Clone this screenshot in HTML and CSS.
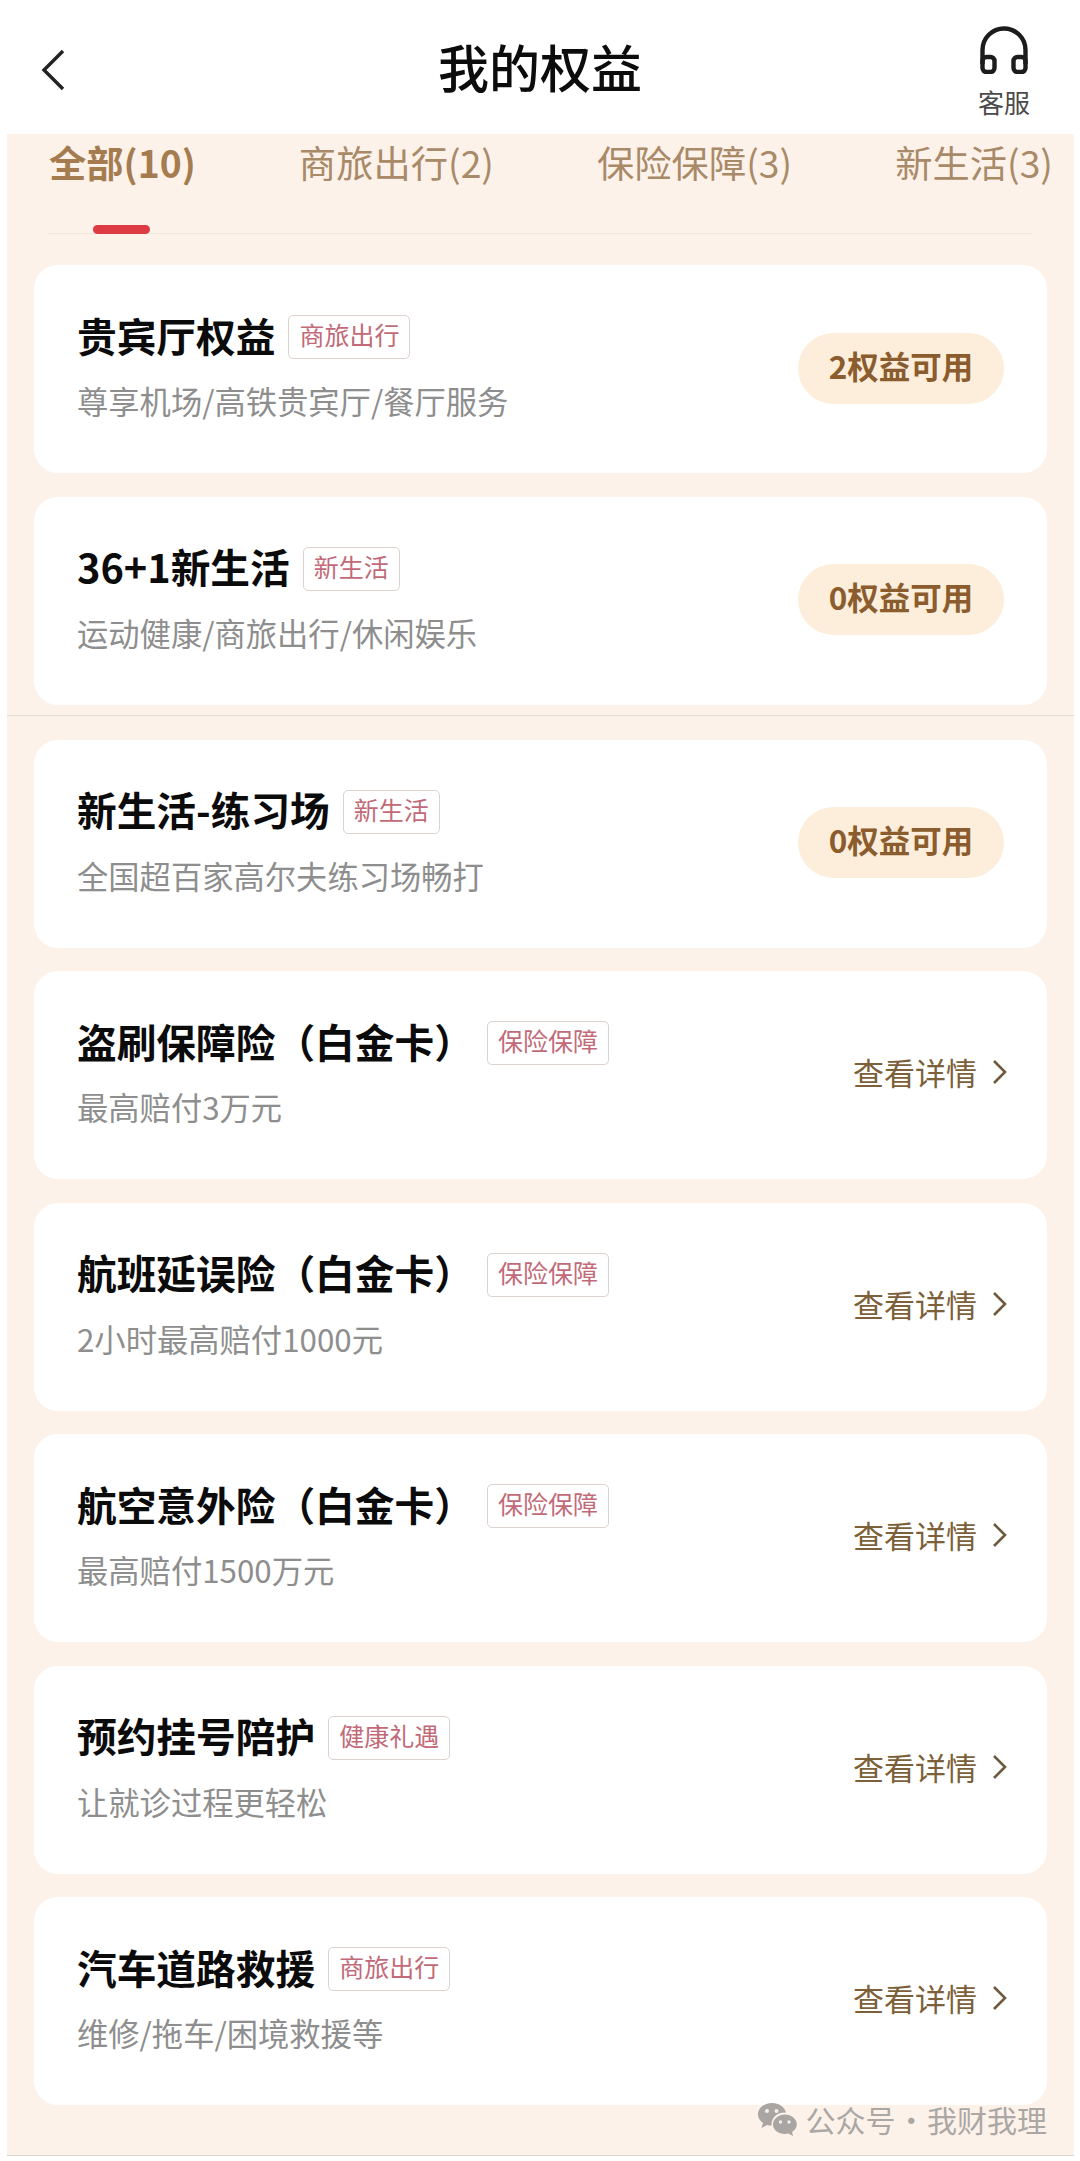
FILE: index.html
```html
<!DOCTYPE html>
<html lang="zh-CN">
<head>
<meta charset="utf-8">
<title>我的权益</title>
<link rel="stylesheet" href="styles.css">
</head>
<body>
<header class="top">
  <div class="top-left">
    <svg class="back" viewBox="0 0 26 42" width="26" height="42"><path d="M23 2 L4 21 L23 40" fill="none" stroke="#222" stroke-width="3.4"/></svg>
  </div>
  <h1 class="page-title">我的权益</h1>
  <div class="top-right">
    <div class="service">
      <svg viewBox="0 0 48 48" width="48" height="48"><g fill="none" stroke="#1c1c1c" stroke-width="4.4"><path d="M2.5 38 V24 a21.5 21.5 0 0 1 43 0 V38"/><rect x="2.5" y="31" width="12" height="15" rx="4"/><rect x="33.5" y="31" width="12" height="15" rx="4"/></g></svg>
      <span class="service-label">客服</span>
    </div>
  </div>
</header>
<main class="panel">
  <nav class="tabs">
    <span class="tab tab-active">全部(10)</span>
    <span class="tab">商旅出行(2)</span>
    <span class="tab">保险保障(3)</span>
    <span class="tab">新生活(3)</span>
  </nav>
  <div class="tab-rule"><span class="tab-marker"></span></div>
  <section class="list">
    <article class="card">
      <div class="info"><div class="title-row"><h2 class="name">贵宾厅权益</h2><span class="tag">商旅出行</span></div><p class="desc">尊享机场/高铁贵宾厅/餐厅服务</p></div>
      <span class="pill">2权益可用</span>
    </article>
    <article class="card">
      <div class="info"><div class="title-row"><h2 class="name">36+1新生活</h2><span class="tag">新生活</span></div><p class="desc">运动健康/商旅出行/休闲娱乐</p></div>
      <span class="pill">0权益可用</span>
    </article>
    <hr class="divider">
    <article class="card">
      <div class="info"><div class="title-row"><h2 class="name">新生活-练习场</h2><span class="tag">新生活</span></div><p class="desc">全国超百家高尔夫练习场畅打</p></div>
      <span class="pill">0权益可用</span>
    </article>
    <article class="card">
      <div class="info"><div class="title-row"><h2 class="name">盗刷保障险（白金卡）</h2><span class="tag">保险保障</span></div><p class="desc">最高赔付3万元</p></div>
      <span class="more">查看详情<svg class="chev" viewBox="0 0 16 26" width="16" height="26"><path d="M2 2 L13 13 L2 24" fill="none" stroke="#6f5a40" stroke-width="2.6"/></svg></span>
    </article>
    <article class="card">
      <div class="info"><div class="title-row"><h2 class="name">航班延误险（白金卡）</h2><span class="tag">保险保障</span></div><p class="desc">2小时最高赔付1000元</p></div>
      <span class="more">查看详情<svg class="chev" viewBox="0 0 16 26" width="16" height="26"><path d="M2 2 L13 13 L2 24" fill="none" stroke="#6f5a40" stroke-width="2.6"/></svg></span>
    </article>
    <article class="card">
      <div class="info"><div class="title-row"><h2 class="name">航空意外险（白金卡）</h2><span class="tag">保险保障</span></div><p class="desc">最高赔付1500万元</p></div>
      <span class="more">查看详情<svg class="chev" viewBox="0 0 16 26" width="16" height="26"><path d="M2 2 L13 13 L2 24" fill="none" stroke="#6f5a40" stroke-width="2.6"/></svg></span>
    </article>
    <article class="card">
      <div class="info"><div class="title-row"><h2 class="name">预约挂号陪护</h2><span class="tag">健康礼遇</span></div><p class="desc">让就诊过程更轻松</p></div>
      <span class="more">查看详情<svg class="chev" viewBox="0 0 16 26" width="16" height="26"><path d="M2 2 L13 13 L2 24" fill="none" stroke="#6f5a40" stroke-width="2.6"/></svg></span>
    </article>
    <article class="card">
      <div class="info"><div class="title-row"><h2 class="name">汽车道路救援</h2><span class="tag">商旅出行</span></div><p class="desc">维修/拖车/困境救援等</p></div>
      <span class="more">查看详情<svg class="chev" viewBox="0 0 16 26" width="16" height="26"><path d="M2 2 L13 13 L2 24" fill="none" stroke="#6f5a40" stroke-width="2.6"/></svg></span>
    </article>
  </section>
  <div class="watermark">
    <svg viewBox="0 0 40 34" width="40" height="34"><path d="M15 1 C7 1 1 6 1 12.500 C1 16 3 19 6 21 L4.500 26 L10 23 C11.500 23.500 13 23.700 14.500 23.700 C14 15 21 10 29 10.500 C27.500 5 22 1 15 1 Z" fill="#a8a5a2"/><path d="M28 12.500 C21.500 12.500 16 17 16 22.500 C16 28 21.500 32 28 32 C29.200 32 30.500 31.800 31.500 31.500 L36 34 L35 30 C37.800 28 39.800 25.500 39.800 22.500 C39.800 17 34.500 12.500 28 12.500 Z" fill="#a8a5a2"/><g fill="#f4efea"><circle cx="10" cy="9" r="2"/><circle cx="19.500" cy="9" r="2"/><circle cx="23.500" cy="20" r="1.700"/><circle cx="32" cy="20" r="1.700"/></g></svg>
    <span>公众号 · 我财我理</span>
  </div>
</main>
</body>
</html>
```
FILE: styles.css
```css
* { box-sizing: border-box; }
html, body { margin: 0; padding: 0; }
body {
  width: 1080px;
  height: 2161px;
  background: #fff;
  font-family: "Noto Sans CJK SC", "Noto Sans", sans-serif;
  overflow: hidden;
}
.top {
  height: 134px;
  display: grid;
  grid-template-columns: 1fr auto 1fr;
  align-items: start;
}
.top-left { padding: 49px 0 0 40px; }
.back { display: block; }
.page-title {
  margin: 0;
  padding-top: 30px;
  font-size: 51px;
  line-height: 72px;
  font-weight: 500;
  color: #0c0c0c;
}
.top-right { display: flex; justify-content: flex-end; padding: 26px 50px 0 0; }
.service { display: flex; flex-direction: column; align-items: center; gap: 11px; width: 52px; }
.service svg { display: block; }
.service-label { font-size: 26px; line-height: 34px; color: #4b4b4b; }

.panel {
  position: relative;
  margin: 0 6px 0 7px;
  background: #fdf2ea;
  border-bottom: 1px solid #d9d6d3;
  padding-bottom: 50px;
}
.tabs {
  display: flex;
  justify-content: space-between;
  padding: 7px 21px 0 42px;
  height: 99px;
}
.tab { font-size: 37.3px; line-height: 42px; color: #a98a68; white-space: nowrap; }
.tab-active { font-weight: 700; color: #a47c50; }
.tab-rule {
  position: relative;
  height: 1px;
  margin: 0 41px 0 41px;
  background: #f3e7dd;
}
.tab-marker {
  position: absolute;
  left: 45px;
  top: -8px;
  width: 57px;
  height: 9px;
  border-radius: 5px;
  background: #dd3b44;
}
.list {
  display: flex;
  flex-direction: column;
  gap: 23.5px;
  padding: 31px 27px 0 27px;
}
.card {
  height: 208px;
  display: flex;
  align-items: center;
  justify-content: space-between;
  padding: 0 43px 0 43px;
  background: #fff;
  border-radius: 24px;
}
.info { display: flex; flex-direction: column; gap: 22px; }
.title-row { display: flex; align-items: center; gap: 13px; height: 44px; }
.name { margin: 0; padding-bottom: 5px; font-size: 39.7px; line-height: 44px; font-weight: 700; color: #0b0b0b; white-space: nowrap; }
.tag {
  height: 44px;
  padding: 0 10px;
  border: 1px solid #dcd2ce;
  border-radius: 5px;
  font-size: 25px;
  line-height: 37px;
  color: #c26a78;
  white-space: nowrap;
}
.desc { margin: 0 0 2px; font-size: 31.3px; line-height: 40px; color: #8e8e8e; white-space: nowrap; }
.pill {
  width: 206px;
  height: 71px;
  margin-bottom: 2px;
  border-radius: 36px;
  background: #fdeedb;
  text-align: center;
  font-size: 31.5px;
  line-height: 65px;
  font-weight: 700;
  color: #8a5c2e;
}
.more {
  display: flex;
  align-items: center;
  gap: 15px;
  margin-right: -4px;
  padding-bottom: 6px;
  font-size: 31px;
  line-height: 40px;
  color: #7c6039;
  white-space: nowrap;
}
.chev { display: block; }
.divider {
  margin: -13px -27px 0 -27px;
  height: 1px;
  border: 0;
  background: #e2dcd6;
}
.watermark {
  position: absolute;
  right: 27px;
  bottom: 18px;
  display: flex;
  align-items: center;
  gap: 9px;
  font-size: 30px;
  line-height: 36px;
  word-spacing: -6px;
  color: #aaa7a4;
  white-space: nowrap;
}
```
